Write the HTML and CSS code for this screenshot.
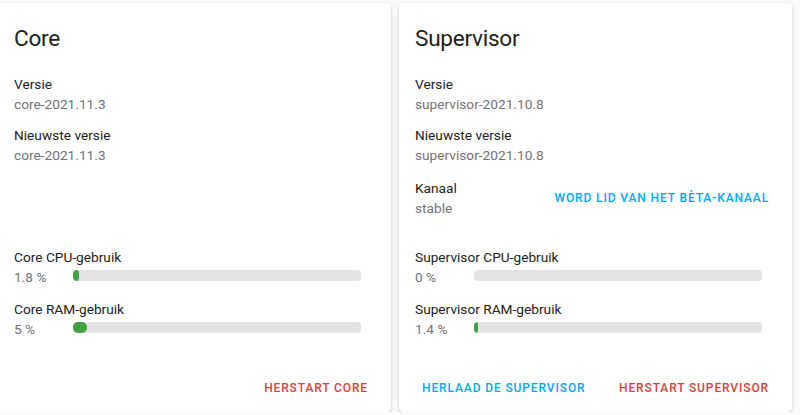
FILE: index.html
```html
<!DOCTYPE html>
<html lang="nl">
<head>
  <meta charset="UTF-8">
  <meta name="viewport" content="width=device-width, initial-scale=1.0">
  <title>Systeem</title>
  <link rel="stylesheet" href="styles.css">
</head>
<body>
  <div class="cards">
    <div class="card">
      <div class="card-content">
        <h1 class="card-title">Core</h1>
        <div class="info">
          <div class="info-row">
            <div class="label">Versie</div>
            <div class="value">core-2021.11.3</div>
          </div>
          <div class="info-row">
            <div class="label">Nieuwste versie</div>
            <div class="value">core-2021.11.3</div>
          </div>
        </div>
        <div class="metrics">
          <div class="metric">
            <div class="label">Core CPU-gebruik</div>
            <div class="metric-row">
              <span class="value metric-value">1.8 %</span>
              <div class="bar"><div class="bar-fill" style="width: 2%"></div></div>
            </div>
          </div>
          <div class="metric">
            <div class="label">Core RAM-gebruik</div>
            <div class="metric-row">
              <span class="value metric-value">5 %</span>
              <div class="bar"><div class="bar-fill" style="width: 5%"></div></div>
            </div>
          </div>
        </div>
      </div>
      <div class="card-actions end">
        <button class="btn btn-red">Herstart Core</button>
      </div>
    </div>

    <div class="card">
      <div class="card-content">
        <h1 class="card-title">Supervisor</h1>
        <div class="info">
          <div class="info-row">
            <div class="label">Versie</div>
            <div class="value">supervisor-2021.10.8</div>
          </div>
          <div class="info-row">
            <div class="label">Nieuwste versie</div>
            <div class="value">supervisor-2021.10.8</div>
          </div>
          <div class="info-row channel">
            <div>
              <div class="label">Kanaal</div>
              <div class="value">stable</div>
            </div>
            <button class="btn btn-blue btn-inline">Word lid van het bèta-kanaal</button>
          </div>
        </div>
        <div class="metrics">
          <div class="metric">
            <div class="label">Supervisor CPU-gebruik</div>
            <div class="metric-row">
              <span class="value metric-value">0 %</span>
              <div class="bar"><div class="bar-fill" style="width: 0%"></div></div>
            </div>
          </div>
          <div class="metric">
            <div class="label">Supervisor RAM-gebruik</div>
            <div class="metric-row">
              <span class="value metric-value">1.4 %</span>
              <div class="bar"><div class="bar-fill" style="width: 1.4%"></div></div>
            </div>
          </div>
        </div>
      </div>
      <div class="card-actions between">
        <button class="btn btn-blue">Herlaad de Supervisor</button>
        <button class="btn btn-red">Herstart Supervisor</button>
      </div>
    </div>
  </div>
</body>
</html>
```

FILE: styles.css
```css
body {
  margin: 0;
  padding: 0;
  background-color: #fafafa;
  font-family: Roboto, "Noto Sans", sans-serif;
  color: #212121;
  overflow: hidden;
}
.cards {
  display: grid;
  grid-template-columns: 1fr 1fr;
  gap: 8px;
  margin: 3px 8px 0 -2px;
}
.card {
  display: flex;
  flex-direction: column;
  background: white;
  border-radius: 4px;
  box-shadow: 0 2px 2px 0 rgba(0, 0, 0, 0.14), 0 1px 5px 0 rgba(0, 0, 0, 0.12), 0 3px 1px -2px rgba(0, 0, 0, 0.2);
}
.card-content {
  flex: 1;
  display: flex;
  flex-direction: column;
  padding: 20px 16px 23px 16px;
}
.card-title {
  margin: 0 0 19px 0;
  font-size: 22.6px;
  font-weight: 400;
  line-height: 32px;
  letter-spacing: -0.012em;
}
.info-row {
  margin-bottom: 11px;
}
.info-row:last-child {
  margin-bottom: 0;
}
.channel {
  display: flex;
  align-items: center;
  justify-content: space-between;
  margin-top: 13px;
}
.label {
  font-size: 13.7px;
  line-height: 20px;
  color: #212121;
}
.value {
  font-size: 13.7px;
  line-height: 20px;
  color: #727272;
}
.metrics {
  margin-top: auto;
  padding-top: 29px;
}
.metric + .metric {
  margin-top: 12px;
}
.metric-row {
  display: flex;
  align-items: center;
}
.metric-value {
  width: 59px;
  flex-shrink: 0;
}
.bar {
  flex: 1;
  height: 11px;
  margin: 0 14px 4px 0;
  border-radius: 4px;
  background: #e3e3e3;
  overflow: hidden;
}
.bar-fill {
  height: 100%;
  border-radius: 5px;
  background: #43a047;
}
.card-actions {
  display: flex;
  padding: 8px 8px 6px 8px;
}
.card-actions.end {
  justify-content: flex-end;
}
.card-actions.between {
  justify-content: space-between;
}
.btn {
  height: 36px;
  padding: 0 15px;
  border: none;
  background: none;
  font-family: Roboto, "Noto Sans", sans-serif;
  font-size: 12px;
  font-weight: 500;
  letter-spacing: 0.88px;
  text-transform: uppercase;
  white-space: nowrap;
  cursor: pointer;
}
.btn-inline {
  padding: 0 7px;
}
.btn-red {
  color: #db4437;
}
.btn-blue {
  color: #03a9f4;
}
```
